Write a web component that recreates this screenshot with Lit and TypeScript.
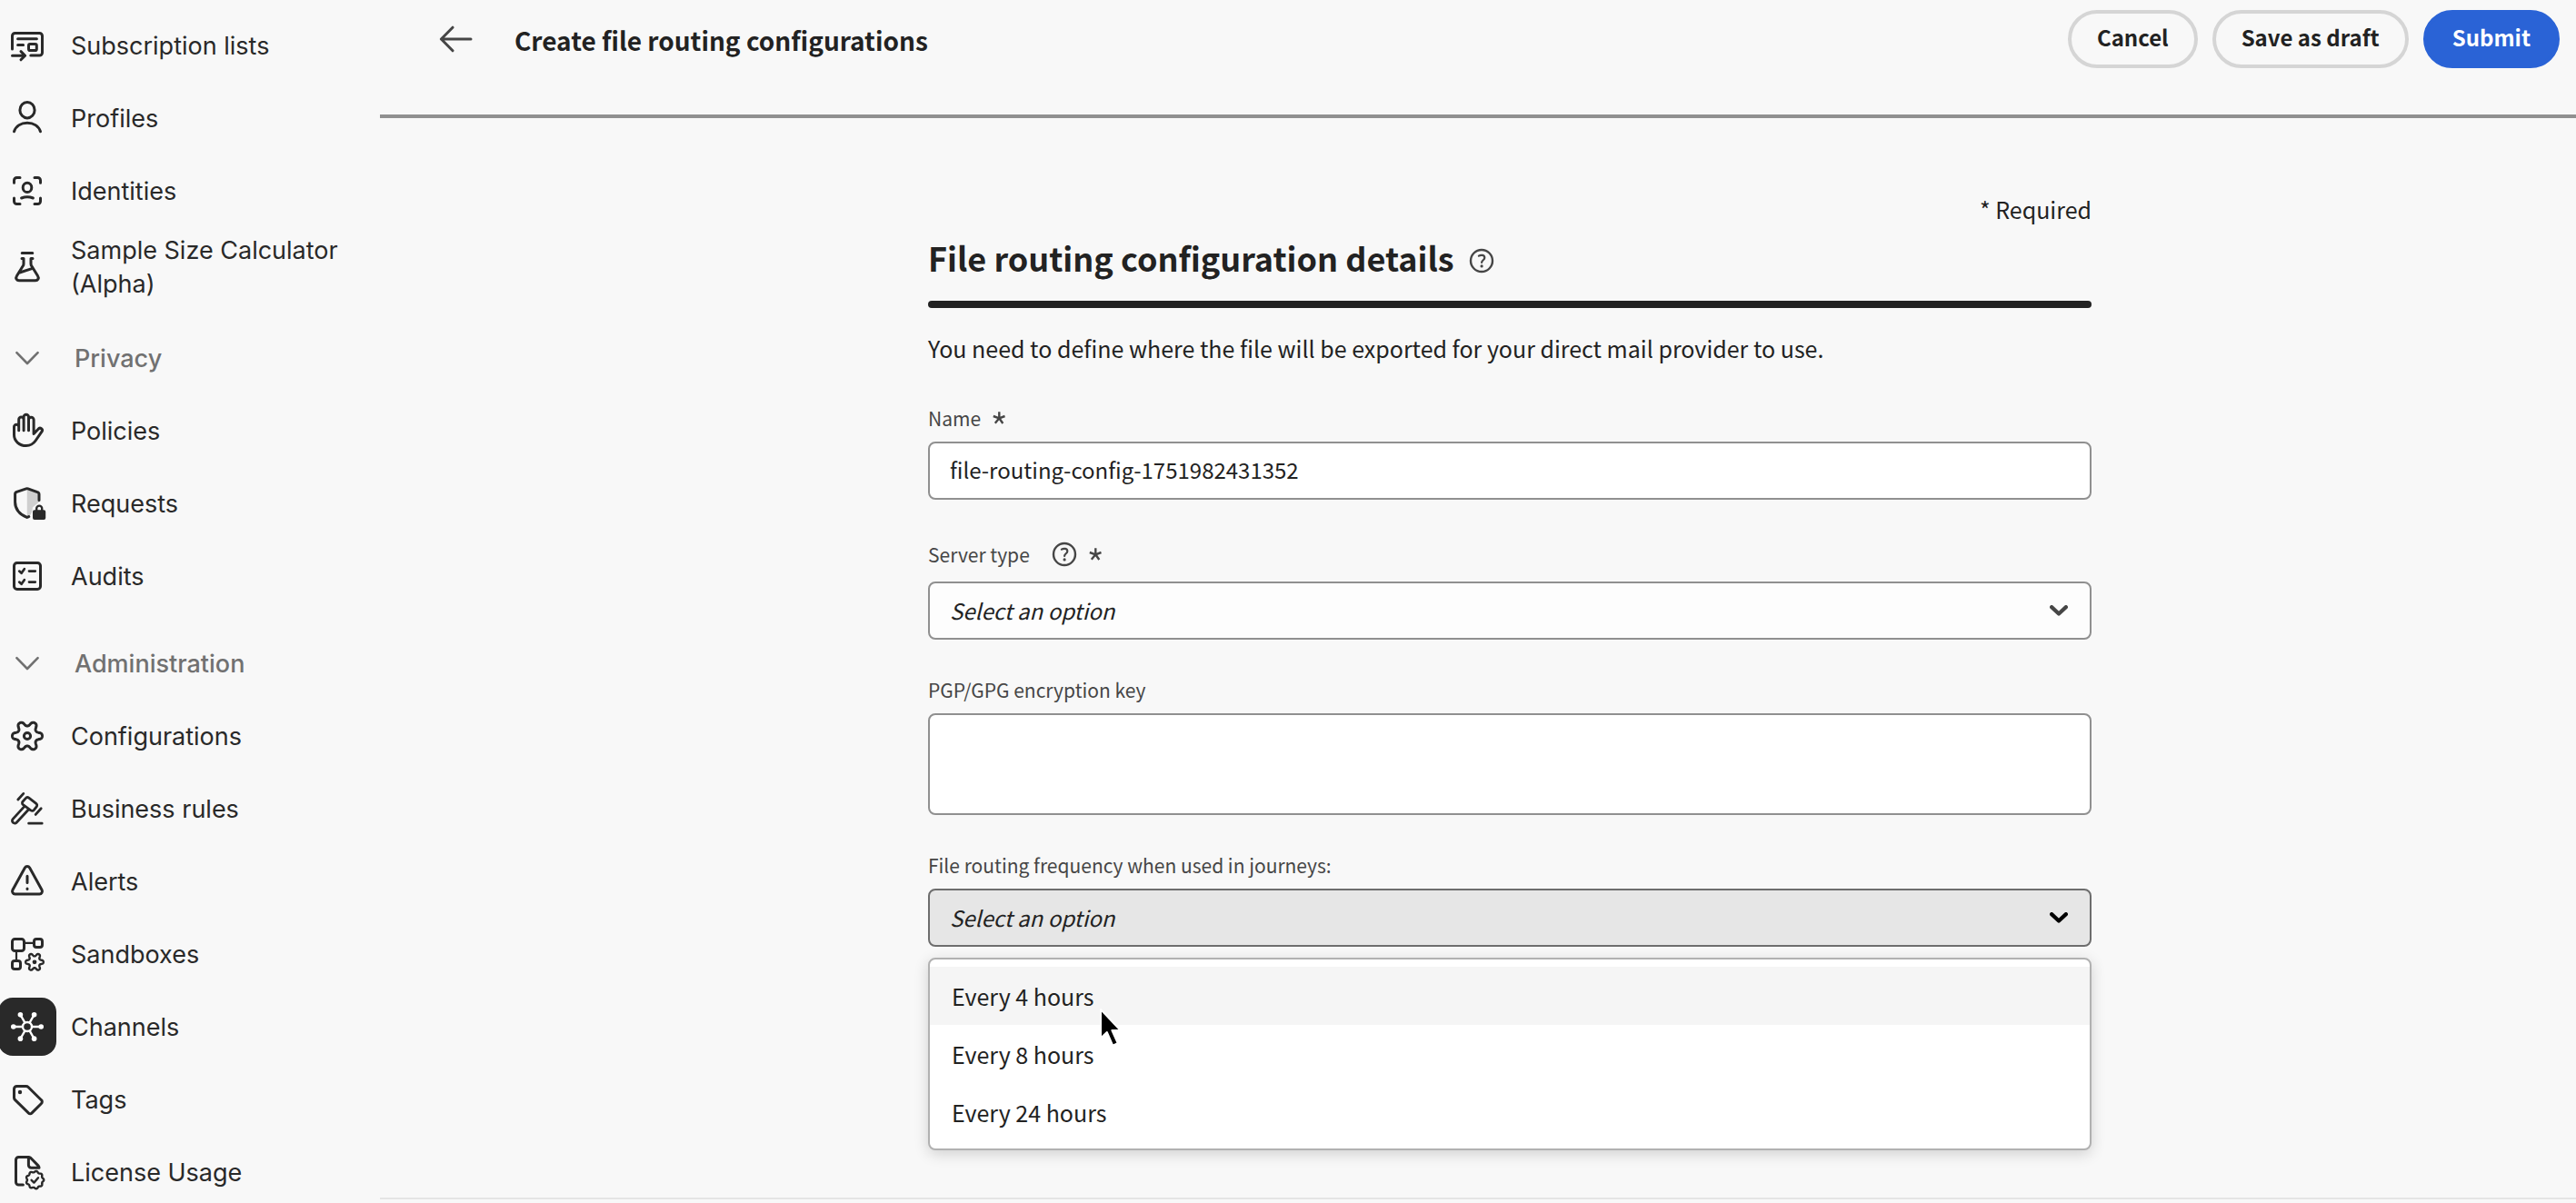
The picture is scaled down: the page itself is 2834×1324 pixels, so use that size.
import { LitElement, html, svg, css } from "lit";
import { customElement, property, state } from "lit/decorators.js";
import { classMap } from "lit/directives/class-map.js";

/** Closed outline with evenly spaced rounded lobes around a centre. */
function lobes(cx: number, cy: number, outer: number, inner: number, count: number, sharp: number): string {
  const mid = (outer + inner) / 2;
  const amp = (outer - inner) / 2;
  const steps = count * 24;
  let d = "";
  for (let i = 0; i < steps; i++) {
    const a = (i / steps) * Math.PI * 2;
    const r = mid + (amp * Math.tanh(sharp * Math.cos(count * a))) / Math.tanh(sharp);
    d += `${i ? "L" : "M"}${(cx + r * Math.cos(a)).toFixed(2)} ${(cy + r * Math.sin(a)).toFixed(2)}`;
  }
  return d + "Z";
}

const spokes = [0, 60, 120, 180, 240, 300].map((deg) => {
  const a = (deg * Math.PI) / 180;
  return { x: Math.cos(a), y: Math.sin(a) };
});

const icons: Record<string, unknown> = {
  subscription: svg`<path d="M1.75 12V4.75a1.5 1.5 0 0 1 1.5-1.5h13.5a1.5 1.5 0 0 1 1.5 1.5v9.25a1.5 1.5 0 0 1-1.5 1.5H11.9M4.8 6.4h10.4M4.8 9.8h3M1.75 15.6H8.5M6.5 13.3l2.3 2.3-2.3 2.3"/><rect x="10.75" y="9.2" width="4.4" height="3.6" rx=".8"/>`,
  profiles: svg`<ellipse cx="10" cy="5.6" rx="4.05" ry="4.35"/><path d="M2.75 17.4C3.7 14.3 6.6 12.6 10 12.6s6.3 1.7 7.25 4.8"/>`,
  identities: svg`<path d="M2.75 5.6V4.25a1.5 1.5 0 0 1 1.5-1.5H6M14 2.75h1.75a1.5 1.5 0 0 1 1.5 1.5V5.6M17.25 14v1.75a1.5 1.5 0 0 1-1.5 1.5H14M6 17.25H4.25a1.5 1.5 0 0 1-1.5-1.5V14M6.8 14c2-.8 4.4-.8 6.4 0"/><ellipse cx="10" cy="8.2" rx="2.4" ry="2.6"/>`,
  flask: svg`<path d="M7.1 2.2h5.8M7 5.2h1v2.9c0 .5-.1.9-.4 1.3L4.2 14.9c-.8 1.2 0 2.5 1.3 2.5h9c1.3 0 2.1-1.3 1.3-2.5L12.4 9.4c-.3-.4-.4-.8-.4-1.3V5.2h1M5.8 13l7.1-2.3"/>`,
  chevron: svg`<path d="M4.2 7.1 10 13l5.8-5.9" stroke-width="1.3"/>`,
  hand: svg`<path d="M2.75 12.3V7.9a1.3 1.3 0 0 1 2.6 0V9.9M5.35 8V3.9a1.35 1.35 0 0 1 2.7 0v6M8.05 4V2.5a1.35 1.35 0 0 1 2.7 0v7.4M10.75 4a1.35 1.35 0 0 1 2.8 0v7.7l2.5-2.6a1.2 1.2 0 0 1 1.9 1.5l-3.4 4.9c-1.3 1.9-2.8 2.75-5.15 2.75-3.9 0-6.65-2.65-6.65-5.95"/>`,
  shield: svg`<path class="tone" d="M9.9 2v15.8c2-1 3-3 3-5.5l3.6-3V4.5Z"/><path d="M16.5 8.2V5c0-.6-.3-1-.9-1.2L10.4 1.9a1.6 1.6 0 0 0-1 0L4.2 3.7c-.6.2-.9.6-.9 1.2v4.3c0 3.8 2.3 6.7 6.5 8.5.4 0 .8-.2 1.1-.4"/><path class="solid" d="M14 13.6h.5v-.8a2.1 2.1 0 0 1 4.2 0v.8h.4a1 1 0 0 1 1 1V18a1 1 0 0 1-1 1H14a1 1 0 0 1-1-1v-3.4a1 1 0 0 1 1-1Zm1.7 0h1.8v-.8a.9.9 0 0 0-1.8 0Z"/>`,
  audits: svg`<rect x="2.75" y="2.75" width="14.5" height="14.5" rx="1.6"/><path d="M5.6 7.3l1.2 1.1 1.6-2.3M5.6 13.3l1.2 1.1 1.6-2.3M11 7.3h3.4M11 13.3h3.4" stroke-width="1.35"/>`,
  gear: svg`<path d="${lobes(10, 10, 8.25, 5.5, 6, 1.3)}"/><circle cx="10" cy="10" r="1.8"/>`,
  gavel: svg`<path d="m7.5 6.1 1.6-1.8a1.3 1.3 0 0 1 1.8-.2l4 3.1a1.2 1.2 0 0 1 .2 1.7l-1.5 1.9a1.2 1.2 0 0 1-1.7.1L7.7 7.8a1.2 1.2 0 0 1-.2-1.7ZM8.5 8.7l-6.4 7a1.35 1.35 0 0 0 2 1.9l6.6-7.1M7.9 1.7 4.9 5M17.6 9.9l-3 3.3M10.8 18.1h7.3" stroke-width="1.4"/>`,
  alert: svg`<path d="M8.7 2.55a1.5 1.5 0 0 1 2.6 0l6.75 12.2a1.5 1.5 0 0 1-1.3 2.2H3.25a1.5 1.5 0 0 1-1.3-2.2ZM10 7.1v3.7M10 14v.2"/>`,
  sandboxes: svg`<rect x="1.75" y="1.75" width="6.5" height="6.5" rx="1.4"/><rect x="13.75" y="1.75" width="4.5" height="4.5" rx="1.3"/><rect x="1.75" y="13.75" width="4.5" height="4.5" rx="1.3"/><path d="M8.5 3.9h5M4 8.5v5" stroke-width="1.1"/><path d="${lobes(14, 14.4, 4.9, 3.2, 6, 1.3)}" stroke-width="1.2"/><circle class="solid" cx="14" cy="14.4" r="1.2"/>`,
  channels: svg`<circle cx="10" cy="10" r="2.5" stroke-width="1.2"/>${spokes.map(
    (s) => svg`<path d="M${10 + s.x * 2.8} ${10 + s.y * 2.8}L${10 + s.x * 7.5} ${10 + s.y * 7.5}" stroke-width="1.2"/><circle class="solid" cx=${10 + s.x * 7.6} cy=${10 + s.y * 7.6} r="1.4"/>`
  )}`,
  tag: svg`<path d="M4.25 2.75h5.1c.5 0 .9.2 1.2.5l7.2 7.1a1.3 1.3 0 0 1 0 1.9l-5.2 5.2a1.3 1.3 0 0 1-1.9 0l-7.3-7.1a1.9 1.9 0 0 1-.6-1.3V4.25a1.5 1.5 0 0 1 1.5-1.5Z"/><circle class="solid" cx="6" cy="6" r="1.1"/>`,
  license: svg`<path d="M7.7 17H5.25a1.5 1.5 0 0 1-1.5-1.5V3.25a1.5 1.5 0 0 1 1.5-1.5H10.7c.4 0 .8.2 1.1.4l4.2 4.3c.2.2.4.6.5 1v.2H12.2a1.5 1.5 0 0 1-1.5-1.5V2"/><path d="${lobes(14.2, 14.3, 4.9, 4.2, 9, 0.8)}" stroke-width="1.2"/><path d="m12.3 14.4 1.4 1.4 2.3-2.7" stroke-width="1.2"/>`,
  back: svg`<path d="M18 10H1.7M8 3.6 1.7 10 8 16.4" stroke-width="1.5"/>`,
};

@customElement("line-icon")
class LineIcon extends LitElement {
  @property() name = "";

  static styles = css`
    :host {
      display: block;
      width: 40px;
      height: 40px;
    }
    .glyph {
      display: block;
      width: 100%;
      height: 100%;
      overflow: visible;
      fill: none;
      stroke: currentColor;
      stroke-width: 1.5;
      stroke-linecap: round;
      stroke-linejoin: round;
    }
    .glyph .solid {
      fill: currentColor;
      stroke: none;
    }
    .glyph .tone {
      fill: #cfcfcf;
      stroke: none;
    }
  `;

  render() {
    return html`<svg class="glyph" viewBox="0 0 20 20" aria-hidden="true">${icons[this.name]}</svg>`;
  }
}

@customElement("help-tip")
class HelpTip extends LitElement {
  static styles = css`
    :host {
      display: block;
    }
    .help {
      display: block;
      padding: 0;
      border: 0;
      background: none;
      color: #464646;
      cursor: pointer;
    }
    .mark {
      display: block;
      width: 28px;
      height: 28px;
    }
  `;

  render() {
    return html`<button class="help" type="button" aria-label="Help">
      <svg class="mark" viewBox="0 0 28 28" fill="none" stroke="currentColor" stroke-linecap="round" aria-hidden="true">
        <circle cx="14" cy="14" r="12" stroke-width="2.4" />
        <path d="M10.9 8.7c2.4-1.6 6.4-1.1 6.400 2 0 2.400-3.200 2.700-3.200 5.200" stroke-width="2.200" />
        <circle cx="14.100" cy="19.900" r="1.600" fill="currentColor" stroke="none" />
      </svg>
    </button>`;
  }
}

interface NavEntry {
  label: string;
  icon: string;
  section?: boolean;
  current?: boolean;
}

const nav: NavEntry[] = [
  { label: "Subscription lists", icon: "subscription" },
  { label: "Profiles", icon: "profiles" },
  { label: "Identities", icon: "identities" },
  { label: "Sample Size Calculator (Alpha)", icon: "flask" },
  { label: "Privacy", icon: "chevron", section: true },
  { label: "Policies", icon: "hand" },
  { label: "Requests", icon: "shield" },
  { label: "Audits", icon: "audits" },
  { label: "Administration", icon: "chevron", section: true },
  { label: "Configurations", icon: "gear" },
  { label: "Business rules", icon: "gavel" },
  { label: "Alerts", icon: "alert" },
  { label: "Sandboxes", icon: "sandboxes" },
  { label: "Channels", icon: "channels", current: true },
  { label: "Tags", icon: "tag" },
  { label: "License Usage", icon: "license" },
];

@customElement("side-nav")
class SideNav extends LitElement {
  static styles = css`
    :host {
      display: block;
      overflow-y: auto;
      scrollbar-width: none;
      font-family: Inter, "Liberation Sans", sans-serif;
      font-size: 27px;
      line-height: 37px;
      color: #292929;
    }
    .list {
      display: flex;
      flex-direction: column;
      padding-top: 10px;
    }
    .entry {
      display: flex;
      align-items: center;
      gap: 16px;
      box-sizing: border-box;
      width: 100%;
      min-height: 80px;
      margin: 0;
      padding: 7px 32px 7px 0;
      border: 0;
      background: none;
      font: inherit;
      color: inherit;
      text-align: left;
      text-decoration: none;
    }
    .section {
      gap: 20px;
      margin-top: 16px;
      font-weight: 500;
      color: #717171;
    }
    .slot {
      display: flex;
      flex: none;
      align-items: center;
      justify-content: center;
      width: 64px;
      height: 64px;
      margin-left: -2px;
      border-radius: 16px;
    }
    .current .slot {
      background: #292929;
      color: #fff;
    }
  `;

  render() {
    return html`<nav class="list" aria-label="Main">
      ${nav.map((n) => {
        const body = html`<span class="slot"><line-icon name=${n.icon}></line-icon></span><span>${n.label}</span>`;
        return n.section
          ? html`<button class="entry section" type="button" aria-expanded="true">${body}</button>`
          : html`<a class=${classMap({ entry: true, current: !!n.current })} href="#">${body}</a>`;
      })}
    </nav>`;
  }
}

@customElement("app-root")
class AppRoot extends LitElement {
  @state() private hovered = 0;

  private frequencies = ["Every 4 hours", "Every 8 hours", "Every 24 hours"];

  static styles = css`
    :host {
      display: grid;
      grid-template-columns: 418px minmax(0, 1fr);
      grid-template-rows: minmax(0, 1fr);
      height: 100vh;
      background: #f8f8f8;
      color: #222;
      font-family: "Noto Sans CJK SC", "Open Sans", sans-serif;
      font-size: 25px;
      line-height: 32px;
    }
    .page {
      display: flex;
      flex-direction: column;
      min-width: 0;
    }
    .top {
      display: flex;
      align-items: flex-start;
      box-sizing: border-box;
      min-height: 130px;
      padding: 11px 18px 0 64px;
      border-bottom: 4px solid #909090;
    }
    .back {
      display: flex;
      align-items: center;
      height: 64px;
      padding: 0;
      border: 0;
      background: none;
      color: #464646;
    }
    .title {
      flex: 1;
      margin: 0 0 0 44px;
      font-size: 28px;
      font-weight: 700;
      line-height: 66px;
    }
    .actions {
      display: flex;
      gap: 16px;
    }
    .button {
      height: 64px;
      padding: 0 28px 4px;
      border: 4px solid #d5d5d5;
      border-radius: 32px;
      background: none;
      font: inherit;
      font-size: 24px;
      font-weight: 700;
      color: inherit;
    }
    .primary {
      border-color: #2a63d6;
      background: #2a63d6;
      color: #fff;
    }
    .body {
      flex: 1;
      padding: 84px 0 0 70px;
    }
    .form {
      display: flex;
      flex-direction: column;
      max-width: 1280px;
      margin: 0 auto;
    }
    .required {
      margin: 0;
      text-align: right;
    }
    .heading-row {
      display: flex;
      align-items: flex-end;
      gap: 16px;
      padding: 19px 0 30px;
    }
    .heading {
      margin: 0;
      font-size: 36px;
      font-weight: 700;
      line-height: 36px;
    }
    .bar {
      height: 8px;
      border-radius: 4px;
      background: #222;
    }
    .intro {
      margin: 28px 0 46px;
    }
    .field {
      display: flex;
      flex-direction: column;
      margin-bottom: 40px;
    }
    .label {
      display: flex;
      align-items: center;
      gap: 12px;
      height: 30px;
      margin-bottom: 11px;
      font-size: 21px;
      color: #464646;
    }
    .tall {
      height: 39px;
    }
    .label help-tip {
      margin-left: 12px;
    }
    .star {
      width: 16px;
      height: 16px;
    }
    .control {
      box-sizing: border-box;
      width: 100%;
      height: 64px;
      margin: 0;
      padding: 0 22px;
      border: 2px solid #909090;
      border-radius: 8px;
      outline: 0;
      background: #fff;
      font: inherit;
      font-size: 24px;
      color: inherit;
      appearance: none;
      resize: none;
    }
    .text {
      padding-bottom: 4px;
    }
    .area {
      display: block;
      height: 112px;
    }
    .picker {
      display: grid;
      align-items: center;
      position: relative;
      color: #222;
    }
    .picker > .control,
    .picker > .caret {
      grid-area: 1 / 1;
    }
    .select {
      background: #fdfdfd;
      font-style: italic;
    }
    .open .select {
      border-color: #6d6d6d;
      background: #e6e6e6;
    }
    .caret {
      justify-self: end;
      width: 20px;
      height: 12px;
      margin-right: 26px;
      color: #464646;
      pointer-events: none;
    }
    .open .caret {
      color: #000;
    }
    .menu {
      position: absolute;
      top: 76px;
      left: 0;
      right: 0;
      margin: 0;
      padding: 8px 0;
      border: 2px solid #b1b1b1;
      border-radius: 8px;
      background: #fff;
      box-shadow: 0 4px 16px rgba(0, 0, 0, 0.16);
      list-style: none;
    }
    .option {
      padding: 0 24px;
      line-height: 64px;
    }
    .hover {
      background: #f5f5f5;
    }
    .pointer {
      position: absolute;
      top: 129px;
      left: 186px;
      width: 32px;
      height: 48px;
      pointer-events: none;
    }
    .foot {
      height: 4px;
      border-top: 2px solid #e5e5e5;
    }
  `;

  private caret() {
    return html`<svg class="caret" viewBox="0 0 20 12" aria-hidden="true">
      <path d="M2.1 2.1 10 9.5l7.9-7.4" fill="none" stroke="currentColor" stroke-width="4.2" stroke-linecap="round" stroke-linejoin="round" />
    </svg>`;
  }

  private star() {
    return html`<svg class="star" viewBox="0 0 16 16" role="img" aria-label="Required">
      <path d="M8.300 8.300V1.300M8.300 8.300 14.500 6M8.300 8.300l4 5.700M8.300 8.300l-4.500 5.500M8.300 8.300 1.800 6" fill="none" stroke="currentColor" stroke-width="2.400" />
    </svg>`;
  }

  render() {
    return html`
      <side-nav></side-nav>
      <main class="page">
        <header class="top">
          <button class="back" type="button" aria-label="Back"><line-icon name="back"></line-icon></button>
          <h1 class="title">Create file routing configurations</h1>
          <div class="actions">
            <button class="button" type="button">Cancel</button>
            <button class="button" type="button">Save as draft</button>
            <button class="button primary" type="submit" form="details">Submit</button>
          </div>
        </header>
        <div class="body">
          <form class="form" id="details" @submit=${(e: Event) => e.preventDefault()}>
            <p class="required">* Required</p>
            <div class="heading-row">
              <h2 class="heading">File routing configuration details</h2>
              <help-tip></help-tip>
            </div>
            <div class="bar"></div>
            <p class="intro">You need to define where the file will be exported for your direct mail provider to use.</p>

            <div class="field">
              <div class="label"><label for="name">Name</label>${this.star()}</div>
              <input class="control text" id="name" type="text" required .value=${"file-routing-config-1751982431352"} />
            </div>

            <div class="field">
              <div class="label tall"><label for="server">Server type</label><help-tip></help-tip>${this.star()}</div>
              <div class="picker">
                <select class="control select" id="server">
                  <option>Select an option</option>
                </select>
                ${this.caret()}
              </div>
            </div>

            <div class="field">
              <div class="label"><label for="key">PGP/GPG encryption key</label></div>
              <textarea class="control area" id="key"></textarea>
            </div>

            <div class="field">
              <div class="label"><label for="frequency">File routing frequency when used in journeys:</label></div>
              <div class="picker open">
                <select class="control select" id="frequency">
                  <option>Select an option</option>
                </select>
                ${this.caret()}
                <ul class="menu" role="listbox" aria-label="File routing frequency">
                  ${this.frequencies.map(
                    (f, i) => html`<li
                      class=${classMap({ option: true, hover: i === this.hovered })}
                      role="option"
                      aria-selected="false"
                      @mouseenter=${() => (this.hovered = i)}
                    >
                      ${f}
                    </li>`
                  )}
                </ul>
                <svg class="pointer" viewBox="0 0 32 48" aria-hidden="true">
                  <path d="M4 4v31.500l6.800-6.500 6.400 14.600 5.500-2.400-6.300-14.200h9.300Z" fill="#000" stroke="#fff" stroke-width="2" stroke-linejoin="round" />
                </svg>
              </div>
            </div>
          </form>
        </div>
        <footer class="foot"></footer>
      </main>
    `;
  }
}
